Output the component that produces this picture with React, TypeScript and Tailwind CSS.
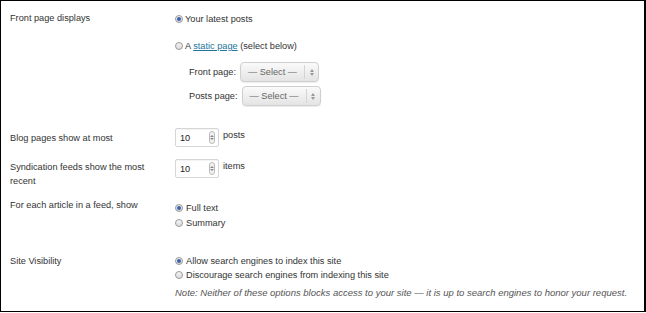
import React from 'react';

function Radio({ checked }: { checked?: boolean }) {
  return (
    <span className="relative inline-flex w-[8px] h-[8px] shrink-0 rounded-full border border-[#9a9a9a] bg-gradient-to-b from-[#f4f4f4] to-[#dcdcdc] items-center justify-center">
      {checked && <span className="w-[4px] h-[4px] rounded-full bg-[#3a62b0]" />}
    </span>
  );
}

function SelectBox() {
  return (
    <div className="flex h-[20px] w-[79px] items-stretch rounded-[4px] border border-[#cfcfcf] bg-gradient-to-b from-[#fafafa] to-[#e4e4e4] shadow-[0_1px_1px_rgba(0,0,0,0.08)]">
      <span className="flex-1 flex items-center justify-center text-[#666]">— Select —</span>
      <span className="w-[14px] my-[2px] border-l border-[#d4d4d4] flex flex-col items-center justify-center gap-[1px]">
        <span className="block w-0 h-0 border-x-[2px] border-x-transparent border-b-[3px] border-b-[#999]" />
        <span className="block w-0 h-0 border-x-[2px] border-x-transparent border-t-[3px] border-t-[#999]" />
      </span>
    </div>
  );
}

function NumberBox({ value }: { value: string }) {
  return (
    <div className="flex h-[19px] w-[44px] items-center rounded-[2px] border border-[#d6d6d6] bg-white pl-[4px] pr-[3px] shadow-[inset_0_1px_1px_rgba(0,0,0,0.05)]">
      <span className="flex-1 text-[#222]">{value}</span>
      <span className="flex h-[13px] w-[6px] flex-col items-center justify-center gap-[1px] rounded-full border border-[#bbb] bg-[#f2f2f2]">
        <span className="block w-0 h-0 border-x-[2px] border-x-transparent border-b-[2px] border-b-[#888]" />
        <span className="block w-0 h-0 border-x-[2px] border-x-transparent border-t-[2px] border-t-[#888]" />
      </span>
    </div>
  );
}

export default function App() {
  return (
    <div className="w-[646px] h-[313px] bg-white">
      <div className="h-[312px] w-[646px] border-l border-t border-b border-r-2 border-black bg-white text-[9.2px] leading-[12px] text-[#333] font-['Liberation_Sans',Arial,sans-serif]">
        {/* Front page displays */}
        <div className="flex pt-[11px]">
          <div className="w-[174px] pl-[9px]">Front page displays</div>
          <div className="flex flex-col">
            <label className="flex items-center gap-[1px] mt-[1px]">
              <Radio checked /> <span className="ml-[1px]">Your latest posts</span>
            </label>
            <label className="flex items-center gap-[1px] mt-[15px]">
              <Radio /> <span className="ml-[1px]">A <a className="text-[#21759b] underline">static page</a> (select below)</span>
            </label>
            <div className="flex items-center gap-[4px] ml-[14px] mt-[10px]">
              <span>Front page:</span>
              <SelectBox />
            </div>
            <div className="flex items-center gap-[4px] ml-[14px] mt-[4px]">
              <span>Posts page:</span>
              <SelectBox />
            </div>
          </div>
        </div>

        {/* Blog pages */}
        <div className="flex mt-[22px]">
          <div className="w-[174px] pl-[9px] pt-[4px]">Blog pages show at most</div>
          <div className="flex items-start gap-[4px]">
            <NumberBox value="10" />
            <span className="pt-[1px]">posts</span>
          </div>
        </div>

        {/* Syndication */}
        <div className="flex mt-[12px]">
          <div className="w-[174px] pl-[9px] pr-[24px] pt-[1px] leading-[14px]">Syndication feeds show the most recent</div>
          <div className="flex items-start gap-[4px]">
            <NumberBox value="10" />
            <span className="pt-[1px]">items</span>
          </div>
        </div>

        {/* Feed article */}
        <div className="flex mt-[11px]">
          <div className="w-[174px] pl-[9px]">For each article in a feed, show</div>
          <div className="flex flex-col gap-[3px] pt-[3px]">
            <label className="flex items-center gap-[3px]"><Radio checked /> Full text</label>
            <label className="flex items-center gap-[3px]"><Radio /> Summary</label>
          </div>
        </div>

        {/* Site visibility */}
        <div className="flex mt-[26px]">
          <div className="w-[174px] pl-[9px]">Site Visibility</div>
          <div className="flex flex-col gap-[2px]">
            <label className="flex items-center gap-[3px]"><Radio checked /> Allow search engines to index this site</label>
            <label className="flex items-center gap-[3px]"><Radio /> Discourage search engines from indexing this site</label>
            <p className="mt-[4px] italic text-[9.5px] text-[#555] whitespace-nowrap">Note: Neither of these options blocks access to your site — it is up to search engines to honor your request.</p>
          </div>
        </div>
      </div>
    </div>
  );
}
